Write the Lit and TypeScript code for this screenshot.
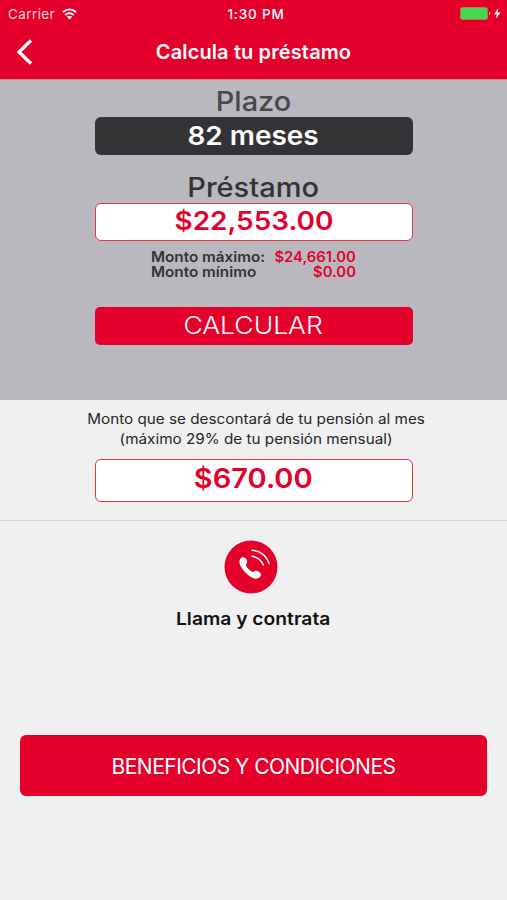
import { LitElement, html, css } from "lit";
import { customElement } from "lit/decorators.js";

@customElement("app-root")
export class AppRoot extends LitElement {
  static styles = css`
    :host {
      display: flex;
      flex-direction: column;
      box-sizing: border-box;
      width: 507px;
      height: 900px;
      overflow: hidden;
      background: #f0f0f0;
      color: #333235;
      font-family: Inter, "Liberation Sans", sans-serif;
      white-space: nowrap;
    }
    svg { display: block; }
    header {
      height: 80px;
      background: #e4002b;
      color: #fff;
      border-bottom: 1px solid #d5899c;
      box-sizing: border-box;
      flex: none;
    }
    .status, .nav {
      display: grid;
      grid-template-columns: 1fr auto 1fr;
      align-items: center;
    }
    .status { height: 27px; padding: 0 5px 0 8px; font-size: 13.5px; }
    .left { display: flex; align-items: center; gap: 7px; }
    .carrier { color: #ffd3da; letter-spacing: 0.4px; }
    .clock { font-weight: 500; letter-spacing: 0.8px; padding-left: 2px; }
    .battery { justify-self: end; }
    .nav { height: 50px; padding: 0 0 0 16px; margin-right: 16px; }
    h1 { margin: 0; font-size: 20px; line-height: 24px; font-weight: 600; letter-spacing: 0.12px; }
    .form {
      height: 320px;
      flex: none;
      background: #b9b8bf;
      display: flex;
      flex-direction: column;
      align-items: center;
    }
    .label { font-size: 26.5px; line-height: 32px; font-weight: 500; transform: scaleX(1.095); }
    .term { color: #48474c; margin-top: 5px; }
    .loan { margin-top: 16px; font-weight: 550; }
    .field {
      box-sizing: border-box;
      width: 318px;
      height: 38px;
      border-radius: 6px;
      display: flex;
      align-items: center;
      justify-content: center;
      font-size: 26px;
      line-height: 32px;
      font-weight: 600;
    }
    .field span { transform: scaleX(1.075); }
    .months { background: #333235; color: #fff; padding-bottom: 1px; }
    .amount { background: #fff; border: 1.5px solid #e3343f; color: #e4002b; padding-bottom: 3px; }
    .limits {
      display: grid;
      grid-template-columns: auto auto;
      justify-content: space-between;
      width: 205.5px;
      margin-top: 8px;
      font-size: 14px;
      line-height: 15px;
      font-weight: 600;
    }
    .name { transform: scaleX(1.09); transform-origin: left; }
    .value { color: #e4002b; text-align: right; transform: scaleX(1.06); transform-origin: right; }
    .calc {
      border-radius: 5px;
      background: #e4002b;
      color: #fff;
      margin-top: 28px;
      font-size: 24px;
      font-weight: 300;
    }
    .calc span { transform: scaleX(1.105); }
    .result {
      height: 121px;
      box-sizing: border-box;
      flex: none;
      border-bottom: 1px solid #d3d3d4;
      display: flex;
      flex-direction: column;
      align-items: center;
      padding-top: 9px;
    }
    .note { font-size: 14px; line-height: 20px; text-align: center; color: #252527; transform: scaleX(1.09); padding-left: 4px; }
    .monthly { height: 43px; margin-top: 10px; padding-bottom: 3px; font-size: 27px; }
    .call { display: flex; flex-direction: column; align-items: center; padding-top: 19px; }
    .call-icon { margin-right: 6px; }
    .call-text { margin-top: 13px; font-size: 17.5px; line-height: 24px; font-weight: 600; color: #111; transform: scaleX(1.1); }
    .benefits {
      margin: 104px 20px 0;
      height: 61px;
      box-sizing: border-box;
      padding-top: 2px;
      border-radius: 6px;
      background: #e4002b;
      color: #fff;
      display: flex;
      align-items: center;
      justify-content: center;
      font-size: 21px;
      letter-spacing: -0.52px;
    }
  `;

  render() {
    return html`
      <header>
        <div class="status">
          <div class="left">
            <span class="carrier">Carrier</span>
            <svg width="15" height="12" viewBox="0 0 15 12" fill="none" stroke="#fff" stroke-width="1.8">
              <path d="M.8 4.3Q7.5-1.6 14.2 4.3M3.2 7Q7.5 3.2 11.8 7" />
              <path d="M7.5 11.4 4.9 8.8Q7.5 6.8 10.1 8.8Z" fill="#fff" stroke="none" />
            </svg>
          </div>
          <span class="clock">1:30 PM</span>
          <svg class="battery" width="42" height="13" viewBox="0 0 42 13">
            <rect x=".5" y=".5" width="27" height="12" rx="2" fill="#45d653" stroke="#b57a45" />
            <path d="M29 4.5Q31 6.5 29 8.5Z" fill="#f8b8bd" />
            <path d="M38.3 1 34 7.2H36.8L35.7 12 40.5 5.6H37.5Z" fill="#fff" />
          </svg>
        </div>
        <div class="nav">
          <svg width="17" height="26" viewBox="0 0 17 26" fill="none" stroke="#fff" stroke-width="3.3">
            <path d="M15 1.5 3 13 15 24.5" />
          </svg>
          <h1>Calcula tu préstamo</h1>
          <span></span>
        </div>
      </header>
      <section class="form">
        <div class="label term">Plazo</div>
        <div class="field months"><span>82 meses</span></div>
        <div class="label loan">Préstamo</div>
        <div class="field amount"><span>$22,553.00</span></div>
        <div class="limits">
          <span class="name">Monto máximo:</span><span class="value">$24,661.00</span>
          <span class="name">Monto mínimo</span><span class="value">$0.00</span>
        </div>
        <div class="field calc"><span>CALCULAR</span></div>
      </section>
      <section class="result">
        <div class="note">Monto que se descontará de tu pensión al mes<br />(máximo 29% de tu pensión mensual)</div>
        <div class="field amount monthly"><span>$670.00</span></div>
      </section>
      <section class="call">
        <svg class="call-icon" width="54" height="54" viewBox="0 0 54 54">
          <circle cx="27" cy="27" r="26.5" fill="#e4002b" />
          <path fill="#fff" d="M16.5 18.5C18 16.7 20.8 16.7 22.1 18.8C23.6 21 23.6 22.6 21.9 24.6C22 27.3 26 31 28.8 32C30.8 30.5 32.5 30.4 34.5 31.5C37 32.7 37.7 34.8 36.3 36.5C34.2 39.1 30.9 39.3 27.5 37.3C22.7 34.5 17.4 29 15.8 24C15.2 21.8 15.2 20 16.5 18.5Z" />
          <path fill="none" stroke="#fff" stroke-width="1.5" stroke-linecap="round" d="M28 10.3Q40.5 11 45 23.3M28 16.3Q36 17.2 39.3 25" />
        </svg>
        <div class="call-text">Llama y contrata</div>
      </section>
      <div class="benefits">BENEFICIOS Y CONDICIONES</div>
    `;
  }
}
